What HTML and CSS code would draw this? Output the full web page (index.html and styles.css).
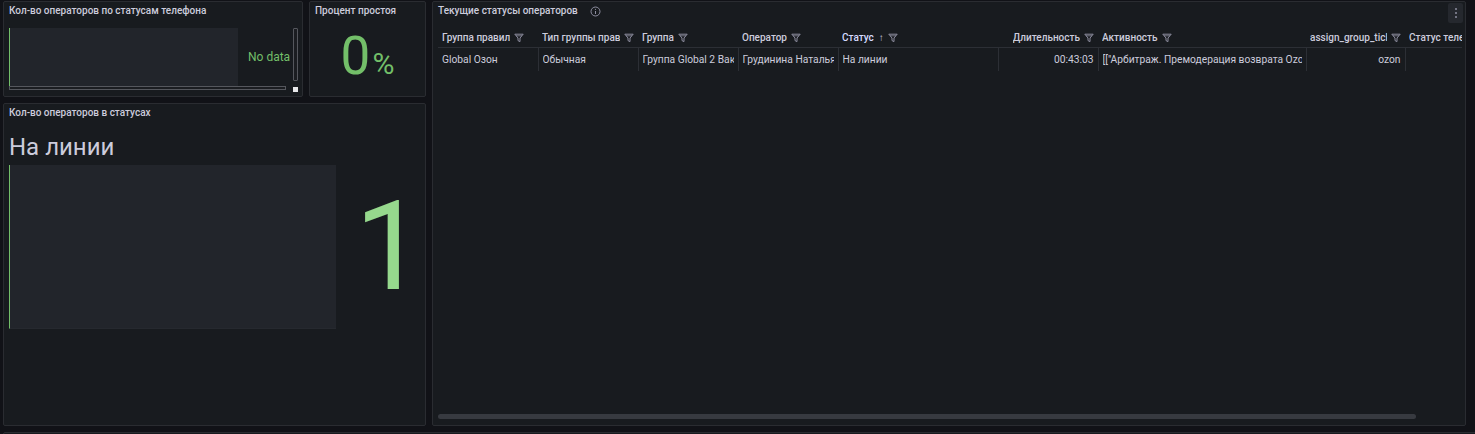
FILE: index.html
```html
<!DOCTYPE html>
<html>
<head>
  <title>Статусы операторов</title>
  <link rel="stylesheet" href="styles.css">
</head>
<body>

  <div class="dashboard">

    <div class="panel phones">
      <div class="panel-title">Кол-во операторов по статусам телефона</div>
      <div class="phones-body">
        <div class="phones-main">
          <div class="chart-box"></div>
          <div class="no-data">No data</div>
        </div>
        <div class="vscroll"></div>
        <div class="hscroll"></div>
        <div class="corner"></div>
      </div>
    </div>

    <div class="panel idle">
      <div class="panel-title">Процент простоя</div>
      <div class="idle-body">
        <span class="idle-value">0</span><span class="idle-unit">%</span>
      </div>
    </div>

    <div class="panel table-panel">
      <div class="panel-title table-title">
        <span>Текущие статусы операторов</span>
        <svg class="info-icon" width="11" height="11" viewBox="0 0 11 11">
          <circle cx="5.5" cy="5.5" r="4.5" fill="none" stroke="#8e8ea0" stroke-width="1"/>
          <line x1="5.5" y1="5" x2="5.5" y2="8" stroke="#8e8ea0" stroke-width="1"/>
          <circle cx="5.5" cy="3.3" r="0.6" fill="#8e8ea0"/>
        </svg>
        <div class="menu-btn">
          <svg width="4" height="12" viewBox="0 0 4 12">
            <circle cx="2" cy="2" r="1" fill="#8e8ea0"/>
            <circle cx="2" cy="6" r="1" fill="#8e8ea0"/>
            <circle cx="2" cy="10" r="1" fill="#8e8ea0"/>
          </svg>
        </div>
      </div>

      <div class="table-wrap">
        <table class="grid">
          <colgroup>
            <col style="width:100px">
            <col style="width:100px">
            <col style="width:100px">
            <col style="width:100px">
            <col style="width:160px">
            <col style="width:100px">
            <col style="width:208px">
            <col style="width:99px">
            <col style="width:100px">
          </colgroup>
          <thead>
            <tr>
              <th><div class="th-in"><span class="th-text">Группа правил</span><i class="filter"></i></div></th>
              <th><div class="th-in"><span class="th-text">Тип группы правил</span><i class="filter"></i></div></th>
              <th><div class="th-in"><span class="th-text">Группа</span><i class="filter"></i></div></th>
              <th><div class="th-in"><span class="th-text">Оператор</span><i class="filter"></i></div></th>
              <th><div class="th-in"><span class="th-text sorted">Статус</span><span class="sort">↑</span><i class="filter"></i></div></th>
              <th><div class="th-in right"><span class="th-text">Длительность</span><i class="filter"></i></div></th>
              <th><div class="th-in"><span class="th-text">Активность</span><i class="filter"></i></div></th>
              <th><div class="th-in right"><span class="th-text">assign_group_ticket</span><i class="filter"></i></div></th>
              <th><div class="th-in"><span class="th-text">Статус телефона</span><i class="filter"></i></div></th>
            </tr>
          </thead>
          <tbody>
            <tr>
              <td><div class="cell">Global Озон</div></td>
              <td><div class="cell">Обычная</div></td>
              <td><div class="cell">Группа Global 2 Вакуум</div></td>
              <td><div class="cell">Грудинина Наталья</div></td>
              <td><div class="cell">На линии</div></td>
              <td class="num"><div class="cell">00:43:03</div></td>
              <td><div class="cell">[["Арбитраж. Премодерация возврата Ozon"]]</div></td>
              <td class="num"><div class="cell">ozon</div></td>
              <td><div class="cell"></div></td>
            </tr>
          </tbody>
        </table>
      </div>
      <div class="table-scroll"><div class="table-thumb"></div></div>
    </div>

    <div class="panel statuses">
      <div class="panel-title">Кол-во операторов в статусах</div>
      <div class="statuses-body">
        <div class="status-name">На линии</div>
        <div class="status-bar"></div>
        <div class="status-count">1</div>
      </div>
    </div>

    <div class="panel next-row"></div>

  </div>

</body>
</html>
```

FILE: styles.css
```css
html, body {
  margin: 0;
  height: 100%;
  overflow: hidden;
}

body {
  background: #111217;
  font-family: Roboto, "Noto Sans", sans-serif;
  color: #ccccdc;
}

.dashboard {
  display: grid;
  grid-template-columns: 300px 117px 1034px;
  grid-template-rows: 96px 323px 40px;
  column-gap: 6px;
  row-gap: 6px;
  padding: 1px 0 0 3px;
}

.panel {
  background: #181b1f;
  border: 1px solid #2a2c31;
  border-radius: 2px;
  box-sizing: border-box;
  overflow: hidden;
  position: relative;
}

.panel-title {
  height: 18px;
  line-height: 18px;
  padding: 0 5px;
  font-size: 10px;
  font-weight: 500;
  white-space: nowrap;
}

/* phone statuses */
.phones-body {
  display: grid;
  grid-template-columns: 283px 5px;
  grid-template-rows: 58px 6px;
  column-gap: 1px;
  margin: 8px 0 0 5px;
}

.phones-main {
  display: flex;
  align-items: center;
}

.chart-box {
  flex-shrink: 0;
  width: 228px;
  height: 58px;
  background: #22252b;
  border-left: 1px solid #73bf69;
}

.no-data {
  margin-left: 10px;
  font-size: 12px;
  white-space: nowrap;
  color: #73bf69;
}

.vscroll {
  height: 53px;
  background: #1b1d21;
  border: 1px solid #55575d;
  box-sizing: border-box;
  border-radius: 1px;
}

.hscroll {
  height: 4px;
  width: 277px;
  background: #1b1d21;
  border: 1px solid #55575d;
  box-sizing: border-box;
}

.corner {
  width: 5px;
  height: 5px;
  background: #e8e8ea;
  margin-top: 1px;
}

/* idle percent */
.idle-body {
  display: flex;
  justify-content: center;
  align-items: baseline;
  padding-top: 5px;
  color: #73bf69;
}

.idle-value {
  font-size: 53px;
  line-height: 62px;
}

.idle-unit {
  font-size: 30px;
  margin-left: 2px;
}

/* statuses */
.statuses {
  grid-column: 1 / 3;
}

.statuses-body {
  display: grid;
  grid-template-columns: 327px 1fr;
  grid-template-rows: 30px 164px;
  row-gap: 3px;
  padding: 10px 0 0 5px;
}

.status-name {
  font-size: 24px;
  line-height: 30px;
  grid-column: 1 / 3;
}

.status-bar {
  background: #22252b;
  border-left: 1px solid #73bf69;
  border-bottom: 1px solid #26292f;
}

.status-count {
  font-size: 124px;
  line-height: 164px;
  text-align: center;
  color: #96d98d;
  padding-left: 18px;
}

/* table */
.table-panel {
  grid-column: 3;
  grid-row: 1 / 3;
}

.table-title {
  display: flex;
  align-items: center;
}

.info-icon {
  margin-left: 12px;
  margin-top: 1px;
}

.menu-btn {
  position: absolute;
  top: 1px;
  right: 2px;
  width: 15px;
  height: 20px;
  background: #25282e;
  border-radius: 2px;
  display: flex;
  align-items: center;
  justify-content: center;
}

.table-wrap {
  margin: 8px 3px 0 5px;
  overflow: hidden;
  height: 382px;
}

.grid {
  border-collapse: collapse;
  table-layout: fixed;
  width: 1067px;
  font-size: 10.25px;
}

.grid th {
  height: 19px;
  padding: 0 4px;
  border-bottom: 1px solid #2c2f35;
  font-size: 10px;
  font-weight: 500;
  text-align: left;
}

.th-in {
  display: flex;
  align-items: center;
  white-space: nowrap;
}

.th-in.right {
  justify-content: flex-end;
}

.th-text {
  overflow: hidden;
  min-width: 0;
}

.sorted {
  color: #d6dcff;
}

.sort {
  font-size: 10px;
  margin-left: 5px;
  color: #ccccdc;
  flex-shrink: 0;
}

.filter {
  flex-shrink: 0;
  width: 10px;
  height: 10px;
  margin-left: 4px;
  background: no-repeat center / 10px 10px url("data:image/svg+xml;utf8,<svg xmlns='http://www.w3.org/2000/svg' viewBox='0 0 10 10'><path d='M0.8 1.2h8.4L6 5v3.6L4 7.6V5z' fill='none' stroke='%238e8ea0' stroke-width='1' stroke-linejoin='round'/><line x1='2' y1='2.8' x2='8' y2='2.8' stroke='%238e8ea0' stroke-width='0.8'/></svg>");
}

.grid td {
  height: 23px;
  padding: 0 4px;
  border-right: 1px solid #2c2f35;
}

.cell {
  white-space: nowrap;
  overflow: hidden;
}

.grid td.num {
  text-align: right;
}

.table-scroll {
  position: absolute;
  left: 5px;
  right: 5px;
  bottom: 6px;
  height: 5px;
}

.table-thumb {
  width: 978px;
  height: 5px;
  background: #373a40;
  border-radius: 3px;
}

.next-row {
  grid-column: 1 / 4;
  margin-right: -12px;
}
```
